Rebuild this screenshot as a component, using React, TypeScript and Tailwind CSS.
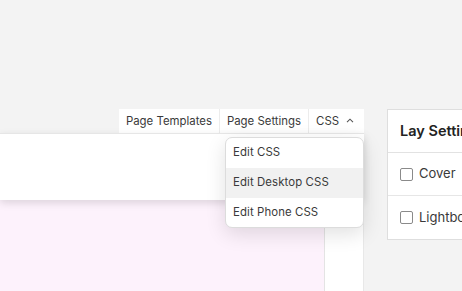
import React from "react";

export default function App() {
  return (
    <div className="relative w-[462px] h-[291px] overflow-hidden bg-[#f3f3f3] font-['Inter',sans-serif] text-[#333]">
      <div className="flex pt-[109px]">
        <div className="w-[364px] flex flex-col shrink-0">
          <div className="flex justify-end h-[24px]">
            <div className="flex bg-white text-[11.4px] leading-[24px] text-[#3a3a3a]">
              <div className="px-[7px] border-r border-[#ececec]">Page Templates</div>
              <div className="px-[7px] border-r border-[#ececec]">Page Settings</div>
              <div className="pl-[7px] pr-[10px] flex items-center gap-[7px]">
                <span>CSS</span>
                <svg width="8" height="5" viewBox="0 0 8 5" className="mt-[-1px]">
                  <path d="M1 4.2 L4 1.2 L7 4.2" fill="none" stroke="#555" strokeWidth="1.1" />
                </svg>
              </div>
            </div>
          </div>
          <div className="relative z-10 h-[67px] bg-white border-t border-[#e6e6e6] shadow-[0_3px_8px_rgba(0,0,0,0.13)]" />
          <div className="flex h-[100px]">
            <div className="w-[325px] bg-[#fdf2fc] border-r border-[#e4e4e4]" />
            <div className="flex-1 bg-white border-r border-[#e8e8e8]" />
          </div>
        </div>
        <div className="ml-[23px] w-[110px] h-[131px] shrink-0 bg-white border border-[#dedede] flex flex-col">
          <div className="h-[43px] flex items-center pl-[12px] border-b border-[#e2e2e2] text-[14.5px] font-semibold text-[#222] whitespace-nowrap">
            Lay Settings
          </div>
          <div className="h-[44px] flex items-center pl-[12px] gap-[6px] border-b border-[#e6e6e6] text-[13px] text-[#3a3a3a]">
            <div className="w-[13px] h-[13px] rounded-[2px] border border-[#8a8a8a] bg-white" />
            <span>Cover</span>
          </div>
          <div className="h-[43px] flex items-center pl-[12px] gap-[6px] text-[13px] text-[#3a3a3a] whitespace-nowrap">
            <div className="w-[13px] h-[13px] rounded-[2px] border border-[#8a8a8a] bg-white" />
            <span>Lightbox</span>
          </div>
        </div>
      </div>

      <div className="absolute z-20 left-[225px] top-[137px] w-[139px] bg-white border border-[#dcdcdc] rounded-[7px] shadow-[0_6px_20px_rgba(0,0,0,0.12)] overflow-hidden text-[11.4px] text-[#3a3a3a] tracking-[0.1px]">
        <div className="h-[30px] flex items-center pl-[7px]">Edit CSS</div>
        <div className="h-[30px] flex items-center pl-[7px] bg-[#f1f1f1]">Edit Desktop CSS</div>
        <div className="h-[29px] flex items-center pl-[7px]">Edit Phone CSS</div>
      </div>
    </div>
  );
}
